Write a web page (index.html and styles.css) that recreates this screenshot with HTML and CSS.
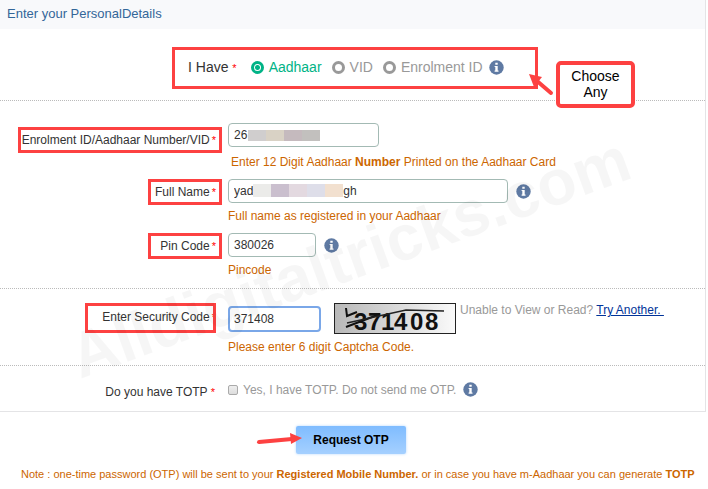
FILE: index.html
```html
<!DOCTYPE html>
<html lang="en">
<head>
    <meta charset="UTF-8">
    <meta name="viewport" content="width=device-width, initial-scale=1.0">
    <title>Request OTP</title>
    <link rel="stylesheet" href="styles.css">
</head>
<body>
    <!-- info icon, reused next to the fields -->
    <svg class="defs" width="0" height="0">
        <symbol id="info" viewBox="0 0 15 15">
            <circle cx="7.5" cy="7.5" r="7.2" fill="#5f7aa3"/>
            <path d="M6.3 2.8h2.4v2H6.3zM5.6 5.9h3.1v4.6h.8v1.2H5.6v-1.2h.7V7.1h-.7z" fill="#fff"/>
        </symbol>
    </svg>

    <form>
        <div class="panel">
            <h1>Enter your PersonalDetails</h1>

            <div class="section choice">
                <div class="choice-box">
                    <span class="choice-title">I Have <i>*</i></span>
                    <label class="option active"><input type="radio" name="idtype" checked>Aadhaar</label>
                    <label class="option"><input type="radio" name="idtype">VID</label>
                    <label class="option"><input type="radio" name="idtype">Enrolment ID</label>
                    <svg class="info"><use href="#info"/></svg>
                </div>
                <div class="callout">Choose<br>Any</div>
                <svg class="arrow arrow-choice" viewBox="0 0 26 24">
                    <path d="M22 20L8 8" stroke="#fd4141" stroke-width="4" stroke-linecap="round"/>
                    <path d="M0 1L13 4L5 14z" fill="#fd4141"/>
                </svg>
            </div>

            <div class="section fields">
                <div class="row">
                    <label for="uid" class="mark">Enrolment ID/Aadhaar Number/VID <i>*</i></label>
                    <div class="field">
                        <div class="line">
                            <input type="text" id="uid" class="text medium" value="26">
                            <span class="mask mask-uid"><b></b><b></b><b></b><b></b></span>
                        </div>
                        <p class="hint indent">Enter 12 Digit Aadhaar <strong>Number</strong> Printed on the Aadhaar Card</p>
                    </div>
                </div>
                <div class="row">
                    <label for="name" class="mark">Full Name <i>*</i></label>
                    <div class="field">
                        <div class="line">
                            <input type="text" id="name" class="text long" value="yad                           gh">
                            <span class="mask mask-name"><b></b><b></b><b></b><b></b><b></b></span>
                            <svg class="info"><use href="#info"/></svg>
                        </div>
                        <p class="hint">Full name as registered in your Aadhaar</p>
                    </div>
                </div>
                <div class="row">
                    <label for="pin" class="mark">Pin Code <i>*</i></label>
                    <div class="field">
                        <div class="line">
                            <input type="text" id="pin" class="text short" value="380026">
                            <svg class="info"><use href="#info"/></svg>
                        </div>
                        <p class="hint">Pincode</p>
                    </div>
                </div>
            </div>

            <div class="section security">
                <div class="row">
                    <label for="captcha" class="mark tall">Enter Security Code <i>*</i></label>
                    <div class="field">
                        <div class="line">
                            <input type="text" id="captcha" class="text short focused" value="371408">
                            <svg class="captcha" viewBox="0 0 122 31">
                                <defs>
                                    <linearGradient id="shade">
                                        <stop offset="0" stop-color="#b8b8b8"/>
                                        <stop offset="1" stop-color="#fafafa"/>
                                    </linearGradient>
                                </defs>
                                <rect x=".5" y=".5" width="121" height="30" fill="url(#shade)" stroke="#222"/>
                                <text x="20 34 47 60 76 91" y="27">371408</text>
                                <path d="M12 5l1 8 10-4M12 24l34-13" fill="none" stroke="#111" stroke-width="2"/>
                                <path d="M13 20L72 7L110 8" fill="none" stroke="#222" stroke-width="1.5"/>
                            </svg>
                            <span class="retry">Unable to View or Read? <a href="#">Try Another.&nbsp;</a></span>
                        </div>
                        <p class="hint">Please enter 6 digit Captcha Code.</p>
                    </div>
                </div>
            </div>

            <div class="section totp">
                <div class="row">
                    <label for="totp">Do you have TOTP <i>*</i></label>
                    <div class="field line">
                        <input type="checkbox" id="totp">
                        <label for="totp" class="muted">Yes, I have TOTP. Do not send me OTP.</label>
                        <svg class="info"><use href="#info"/></svg>
                    </div>
                </div>
            </div>

            <svg class="watermark" viewBox="0 0 708 411">
                <text x="80" y="379" transform="rotate(-20 80 379)">Alldigitaltricks.com</text>
            </svg>
        </div>

        <div class="actions">
            <button type="submit">Request OTP</button>
            <svg class="arrow arrow-submit" viewBox="0 0 46 14">
                <path d="M3 10L36 7" stroke="#fd4141" stroke-width="4" stroke-linecap="round"/>
                <path d="M34 1L46 6L35 12z" fill="#fd4141"/>
            </svg>
        </div>
        <p class="note">Note : one-time password (OTP) will be sent to your <strong>Registered Mobile Number.</strong> or in case you have m-Aadhaar you can generate <strong>TOTP</strong></p>
    </form>
</body>
</html>
```

FILE: styles.css
```css
* {
    box-sizing: border-box;
}
body {
    margin: 0;
    background-color: #fff;
    color: #333;
    font-family: "Liberation Sans", Arial, sans-serif;
    font-size: 12px;
    line-height: 14px;
}
.defs {
    position: absolute;
}
.panel {
    position: relative;
    margin-right: 2px;
    border-right: 1px solid #e4e4e6;
    border-bottom: 1px solid #e4e4e6;
}
h1 {
    margin: 0;
    padding: 5px 7px 6px;
    background-color: #f8f9fb;
    color: #336699;
    font-size: 13px;
    font-weight: normal;
    line-height: 18px;
}
.section + .section {
    border-top: 1px dotted #bbb;
}
i {
    color: #f00;
    font-style: normal;
    font-size: 11px;
}

/* id type */
.choice {
    position: relative;
    display: flex;
    padding: 18px 0 11px 172px;
}
.choice-box {
    display: flex;
    align-items: center;
    width: 366px;
    height: 42px;
    padding: 0 13px 2px;
    border: 3px solid #fd4141;
    font-size: 14px;
}
.choice-title {
    margin-right: 14px;
}
.option {
    display: flex;
    align-items: center;
    gap: 5px;
    margin-right: 10px;
    color: #999;
}
.option.active {
    color: #00b386;
}
.option input {
    appearance: none;
    width: 13px;
    height: 13px;
    margin: 0;
    border: 3px solid #999;
    border-radius: 50%;
}
.option input:checked {
    border-color: #00b386;
    background: radial-gradient(circle, #00b386 2px, #fff 3px);
}
.info {
    flex: none;
    width: 15px;
    height: 15px;
}
.choice-box .info {
    margin-left: -4px;
}
.callout {
    position: absolute;
    z-index: 1;
    top: 32px;
    left: 556px;
    width: 79px;
    padding: 3px 0 4px;
    border: 4px solid #fd4141;
    border-radius: 5px;
    background-color: #fff;
    color: #000;
    font-size: 14px;
    line-height: 16px;
    text-align: center;
}
.arrow {
    position: absolute;
}
.arrow-choice {
    top: 44px;
    left: 529px;
    width: 26px;
    height: 24px;
}

/* fields */
.row {
    display: flex;
}
.row > label {
    flex: none;
    width: 215px;
    margin-right: 13px;
    text-align: right;
}
.row > .mark {
    width: 222px;
    display: flex;
    justify-content: flex-end;
    gap: 2px;
    margin-right: 6px;
}
.line {
    position: relative;
    display: flex;
    align-items: center;
    gap: 8px;
}
.text {
    height: 24px;
    padding: 0 5px;
    border: 1px solid #a3bab4;
    border-radius: 4px;
    background-color: #fff;
    color: #333;
    font: 12px "Liberation Sans", Arial, sans-serif;
}
.medium {
    width: 151px;
}
.long {
    width: 280px;
}
.short {
    width: 88px;
}
.focused {
    width: 93px;
    height: 26px;
    border: 2px solid #7aa7e8;
    padding: 0 4px;
}
.hint {
    margin: 0;
    padding-top: 6px;
    color: #cc6600;
}
.indent {
    padding: 8px 0 0 3px;
}
.fields {
    display: flex;
    flex-direction: column;
    gap: 10px;
    padding: 22px 0 11px;
}
.mask {
    position: absolute;
    display: flex;
    top: 7px;
}
.mask b {
    width: 18px;
    height: 11px;
}
.mask-uid {
    left: 20px;
}
.mask-uid b:nth-child(1) { background-color: #d0cece; }
.mask-uid b:nth-child(2) { background-color: #d9d2c5; }
.mask-uid b:nth-child(3) { background-color: #c5babe; }
.mask-uid b:nth-child(4) { background-color: #c2c0be; }
.mask-name {
    top: 5px;
    left: 25px;
}
.mask-name b {
    height: 13px;
}
.mask-name b:nth-child(1) { background-color: #ebebe9; }
.mask-name b:nth-child(2) { background-color: #cabfce; }
.mask-name b:nth-child(3) { background-color: #e3d9e0; }
.mask-name b:nth-child(4) { background-color: #dedee9; }
.mask-name b:nth-child(5) { background-color: #f2e0cf; }

/* red frame round a label */
.mark {
    position: relative;
    height: 26px;
    line-height: 26px;
    padding-right: 6px;
}
.mark::after {
    content: "";
    position: absolute;
    inset: 0 0 0 148px;
    border: 3px solid #fd4141;
}
.mark[for="uid"] {
    margin-top: 4px;
}
.mark[for="uid"]::after {
    left: 18px;
}
.mark.tall {
    line-height: 28px;
    height: 30px;
}
.mark.tall::after {
    left: 85px;
    right: 6px;
}

/* security code */
.security {
    padding: 14px 0 11px;
}
.captcha {
    position: relative;
    z-index: 1;
    width: 122px;
    height: 31px;
    margin-left: 5px;
}
.captcha text {
    fill: #111;
    font-size: 24px;
    font-weight: bold;
}
.retry {
    align-self: flex-start;
    margin-left: -4px;
    color: #999;
}
.retry a {
    color: #003399;
}

/* totp */
.totp {
    padding: 14px 0 12px;
}
.totp .row > label {
    padding-top: 5px;
}
.totp .field {
    gap: 5px;
}
.totp .info {
    margin-left: 2px;
}
.totp input {
    appearance: none;
    width: 10px;
    height: 10px;
    margin: 0;
    border: 1px solid #aaa;
    border-radius: 2px;
    background: linear-gradient(#eee, #ddd);
}
.muted {
    color: #999;
}
.watermark {
    position: absolute;
    top: 0;
    left: 0;
    width: 708px;
    height: 411px;
    pointer-events: none;
}
.watermark text {
    fill: rgba(0, 0, 0, 0.035);
    font-size: 64px;
    font-weight: bold;
}

.actions {
    position: relative;
    display: flex;
    padding: 14px 0 0 296px;
}
button {
    width: 110px;
    height: 28px;
    border: 0;
    border-radius: 2px;
    background: linear-gradient(#7fbcff, #a5d0ff);
    box-shadow: 0 0 3px #b5d8ff;
    color: #000;
    font: bold 12px "Liberation Sans", Arial, sans-serif;
}
.arrow-submit {
    top: 20px;
    left: 256px;
    width: 46px;
    height: 14px;
}
.note {
    margin: 0;
    padding: 13px 0 0 21px;
    color: #cc6600;
    font-size: 11px;
}
```
